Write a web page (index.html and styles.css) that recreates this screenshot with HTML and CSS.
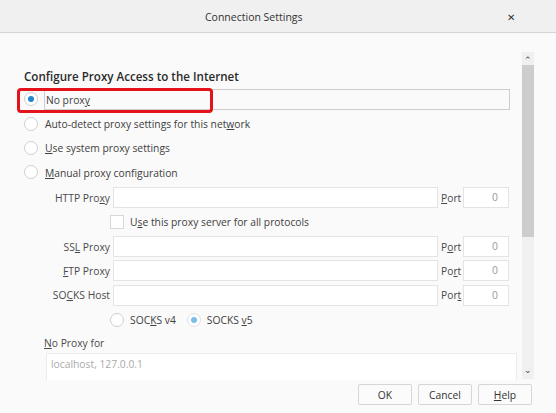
FILE: index.html
```html
<!DOCTYPE html>
<html lang="en">
<head>
  <meta charset="UTF-8">
  <title>Connection Settings</title>
  <meta name="viewport" content="width=device-width, initial-scale=1">
  <link rel="stylesheet" href="styles.css">
</head>
<body>
  <div class="titlebar">
    <span class="title">Connection Settings</span>
    <span class="close">&#x2715;</span>
  </div>

  <div class="main">
    <div class="pane">
      <h2>Configure Proxy Access to the Internet</h2>

      <div class="row"><span class="radio checked"></span><span class="label focused">No prox<u>y</u></span></div>
      <div class="row"><span class="radio"></span><span class="label">Auto-detect proxy settings for this net<u>w</u>ork</span></div>
      <div class="row"><span class="radio"></span><span class="label"><u>U</u>se system proxy settings</span></div>
      <div class="row"><span class="radio"></span><span class="label"><u>M</u>anual proxy configuration</span></div>

      <div class="grid">
        <span class="name">HTTP Pro<u>x</u>y</span>
        <span class="field"></span>
        <span class="port-name"><u>P</u>ort</span>
        <span class="field port">0</span>

        <div class="wide">
          <span class="check"></span>
          <span class="label">U<u>s</u>e this proxy server for all protocols</span>
        </div>

        <span class="name">SS<u>L</u> Proxy</span>
        <span class="field"></span>
        <span class="port-name">P<u>o</u>rt</span>
        <span class="field port">0</span>

        <span class="name"><u>F</u>TP Proxy</span>
        <span class="field"></span>
        <span class="port-name">Po<u>r</u>t</span>
        <span class="field port">0</span>

        <span class="name">SO<u>C</u>KS Host</span>
        <span class="field"></span>
        <span class="port-name">Por<u>t</u></span>
        <span class="field port">0</span>

        <div class="wide">
          <span class="radio"></span>
          <span class="label">SOC<u>K</u>S v4</span>
          <span class="radio checked faded"></span>
          <span class="label">SOCKS <u>v</u>5</span>
        </div>
      </div>

      <div class="noproxy-label"><u>N</u>o Proxy for</div>
      <div class="textarea">localhost, 127.0.0.1</div>
    </div>

    <div class="scrollbar">
      <span class="arrow">&#x2303;</span>
      <span class="thumb"></span>
      <span class="track"></span>
      <span class="arrow down">&#x2304;</span>
    </div>
  </div>

  <div class="footer">
    <button class="btn">OK</button>
    <button class="btn">Cancel</button>
    <button class="btn"><u>H</u>elp</button>
  </div>

  <div class="callout"></div>
</body>
</html>
```

FILE: styles.css
```css
body {
  margin: 0;
  background: #fafafa;
  color: #404040;
  font-family: "Open Sans", "Noto Sans", sans-serif;
  font-size: 10.3px;
  width: 556px;
  height: 413px;
  overflow: hidden;
  position: relative;
}
u {
  text-underline-offset: 1px;
}

/* window title */
.titlebar {
  height: 33px;
  display: flex;
  align-items: center;
  padding-top: 1px;
  box-sizing: border-box;
  background: #f0f0f0;
  border-bottom: 1px solid #d4d4d4;
}
.title {
  margin-left: 205px;
  font-size: 10.5px;
  color: #333;
}
.close {
  margin: 0 41px 0 auto;
  font-size: 10px;
  color: #333;
}

.main {
  display: flex;
  height: 347px;
}
.pane {
  width: 517px;
  height: 347px;
  overflow: hidden;
  box-sizing: border-box;
  padding: 35px 0 0 24px;
}
h2 {
  margin: 0 0 1px;
  font-size: 11.6px;
  line-height: 18px;
  font-weight: 600;
  color: #2a2a2a;
}

.row {
  height: 24.4px;
  display: flex;
  align-items: center;
}
.row .label {
  margin-left: 7px;
  padding-top: 1px;
  line-height: 18px;
}
.focused {
  flex: 1;
  margin: 0 7px 0 6px !important;
  padding-left: 1px;
  border: 1px solid #cdcdcd;
}

.radio {
  width: 12px;
  height: 12px;
  border: 1px solid #cfcfcf;
  border-radius: 50%;
  background: #fff;
  display: inline-flex;
  align-items: center;
  justify-content: center;
  flex: none;
}
.radio.checked::after {
  content: "";
  width: 6px;
  height: 6px;
  border-radius: 50%;
  background: #2186d0;
}
.radio.faded {
  border-color: #e2e2e2;
}
.radio.faded::after {
  background: #7cbde8;
}
.check {
  width: 12px;
  height: 12px;
  border: 1px solid #d8d8d8;
  background: #fff;
  flex: none;
}

/* manual proxy fields */
.grid {
  display: grid;
  grid-template-columns: 86px 325px 20px 45px;
  grid-auto-rows: 24.4px;
  column-gap: 3px;
  align-items: center;
  padding-top: 1px;
}
.name {
  text-align: right;
  color: #4a4a4a;
}
.port-name {
  color: #4a4a4a;
}
.field {
  height: 19px;
  border: 1px solid #e4e4e4;
  background: #fff;
}
.port {
  margin-left: -1px;
  text-align: right;
  padding-right: 10px;
  line-height: 19px;
  color: #999;
}
.wide {
  grid-column: 2 / 5;
  margin-left: -3px;
  display: flex;
  align-items: center;
}
.wide .label {
  margin: 0 6px 0 6px;
}
.wide .radio + .label {
  margin-right: 11px;
}

.noproxy-label {
  margin: 1px 0 0 20px;
  line-height: 20px;
  color: #4a4a4a;
}
.textarea {
  margin-left: 22px;
  height: 40px;
  border: 1px solid #ececec;
  background: #fff;
  padding: 2px 4px;
  line-height: 16px;
  color: #aaa;
}

/* vertical scrollbar */
.scrollbar {
  margin: 19px 0 0 5px;
  width: 12px;
  height: 327px;
  display: flex;
  flex-direction: column;
  background: #f0f0f0;
}
.arrow {
  height: 13px;
  font-size: 9px;
  line-height: 15px;
  text-align: center;
  color: #444;
  flex: none;
}
.arrow.down {
  line-height: 8px;
}
.thumb {
  height: 172px;
  background: #cdcdcd;
  flex: none;
}
.track {
  flex: 1;
}

.footer {
  display: flex;
  justify-content: flex-end;
  gap: 6px;
  padding: 4px 24px 0 0;
}
.btn {
  width: 54px;
  height: 21px;
  padding: 0;
  border: 1px solid #d6d6d6;
  border-radius: 2px;
  background: #fbfbfb;
  font-family: inherit;
  font-size: 10.3px;
  color: #333;
}

/* red marker round the selected option */
.callout {
  position: absolute;
  left: 17px;
  top: 88px;
  width: 196px;
  height: 25px;
  box-sizing: border-box;
  border: 3px solid #e3121b;
  border-radius: 4px;
}
```
